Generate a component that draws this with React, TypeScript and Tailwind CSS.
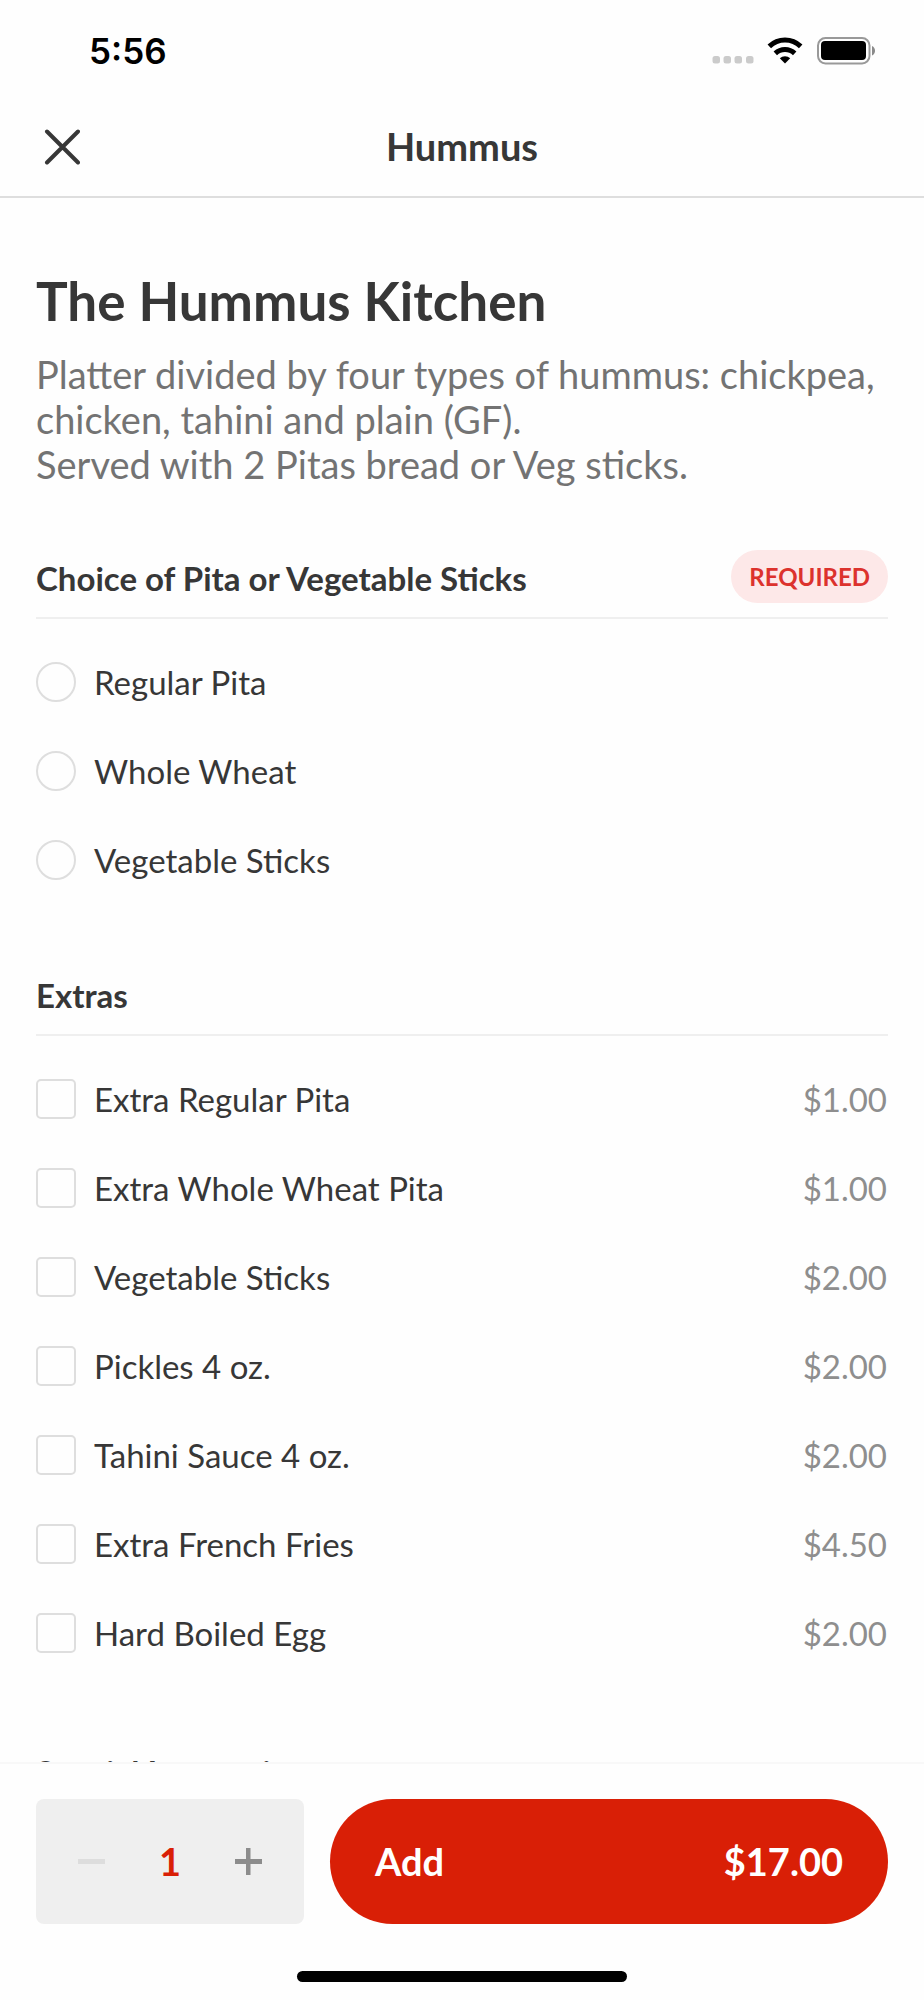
import React, { useState } from 'react';

interface Extra {
  id: string;
  name: string;
  price: number;
}

const BASE_PRICE = 17;

const PITA_CHOICES = ['Regular Pita', 'Whole Wheat', 'Vegetable Sticks'];

const EXTRAS: Extra[] = [
  { id: 'regular-pita', name: 'Extra Regular Pita', price: 1 },
  { id: 'whole-wheat-pita', name: 'Extra Whole Wheat Pita', price: 1 },
  { id: 'veg-sticks', name: 'Vegetable Sticks', price: 2 },
  { id: 'pickles', name: 'Pickles 4 oz.', price: 2 },
  { id: 'tahini', name: 'Tahini Sauce 4 oz.', price: 2 },
  { id: 'fries', name: 'Extra French Fries', price: 4.5 },
  { id: 'egg', name: 'Hard Boiled Egg', price: 2 },
];

const formatPrice = (value: number) => `$${value.toFixed(2)}`;

const StatusBar: React.FC = () => (
  <div className="flex h-[102px] items-center justify-between pl-[89px] pr-12">
    <span className="font-['Inter'] text-[35px] font-semibold leading-10 text-black">5:56</span>
    <div className="flex items-center gap-[13px]">
      {/* No signal */}
      <svg width="42" height="28" viewBox="0 0 42 28" fill="#cbcbcb" aria-hidden="true">
        <rect x="0.5" y="19" width="7.5" height="7.5" rx="2.5" />
        <rect x="11.5" y="19" width="7.5" height="7.5" rx="2.5" />
        <rect x="22.5" y="19" width="7.5" height="7.5" rx="2.5" />
        <rect x="34" y="19" width="7.5" height="7.5" rx="2.5" />
      </svg>
      <svg width="36" height="28" viewBox="0 0 36 28" aria-hidden="true">
        <path d="M2.3 9.4a22.600 22.600 0 0 1 31.400 0" fill="none" stroke="#000" strokeWidth="5" />
        <path d="M8.300 16.300a14.200 14.200 0 0 1 19.400 0" fill="none" stroke="#000" strokeWidth="5" />
        <path d="M18 26.500l-5.200-5.300a7.800 7.800 0 0 1 10.400 0z" fill="#000" />
      </svg>
      <svg width="60" height="28" viewBox="0 0 60 28" aria-hidden="true">
        <rect x="2" y="1" width="51.5" height="25.5" rx="7.5" fill="none" stroke="#999" strokeWidth="2" />
        <rect x="5" y="4" width="45" height="19" rx="4" fill="#000" />
        <path d="M56 9c4 1.500 4 8 0 9.500z" fill="#8a8a8a" />
      </svg>
    </div>
  </div>
);

const SectionHeader: React.FC<{ title: string; required?: boolean }> = ({ title, required }) => (
  <div className="flex h-[69px] items-end justify-between border-b-2 border-[#efefef] pb-[14px]">
    <h2 className="text-[33px] font-bold leading-[49px]">{title}</h2>
    {required && (
      <span className="flex h-[53px] items-center rounded-full bg-[#fde8e8] px-[18px] text-2xl font-bold text-[#dc322d]">
        REQUIRED
      </span>
    )}
  </div>
);

export default function App() {
  const [pita, setPita] = useState('');
  const [selected, setSelected] = useState<string[]>([]);
  const [quantity, setQuantity] = useState(1);

  const toggleExtra = (id: string) => {
    setSelected(prev => (prev.includes(id) ? prev.filter(x => x !== id) : [...prev, id]));
  };

  const extrasTotal = EXTRAS.filter(e => selected.includes(e.id)).reduce((sum, e) => sum + e.price, 0);
  const total = (BASE_PRICE + extrasTotal) * quantity;

  return (
    <div className="flex h-screen flex-col bg-[#fefefe] font-['Lato',sans-serif] text-[#373737]">
      <header className="shrink-0 border-b-2 border-[#dedede]">
        <StatusBar />
        <div className="grid h-[94px] grid-cols-[1fr_auto_1fr] items-center px-11 pb-[5px]">
          <button aria-label="Close" className="w-9">
            <svg width="36" height="36" viewBox="0 0 36 36" fill="none" stroke="#373737" strokeWidth="4" strokeLinecap="round">
              <path d="M3 2.500l31 31M34 2.500L3 33.500" />
            </svg>
          </button>
          <h1 className="text-[38px] font-bold leading-[45px]">Hummus</h1>
        </div>
      </header>

      <main className="min-h-0 flex-1 overflow-y-auto px-9 pt-[71px] [scrollbar-width:none]">
        <h2 className="text-[53px] font-bold leading-[64px]">The Hummus Kitchen</h2>
        <p className="mt-[19px] text-[38px] leading-[45px] text-[#737373]">
          Platter divided by four types of hummus: chickpea, chicken, tahini and plain (GF).
          <br />
          Served with 2 Pitas bread or Veg sticks.
        </p>

        <section className="mt-[63px]">
          <SectionHeader title="Choice of Pita or Vegetable Sticks" required />
          <div className="flex flex-col gap-[49px] pt-[43px]">
            {PITA_CHOICES.map(choice => (
              <label key={choice} className="flex h-10 items-center gap-[18px] text-[33px] leading-10">
                <input
                  type="radio"
                  name="pita"
                  checked={pita === choice}
                  onChange={() => setPita(choice)}
                  className="size-10 shrink-0 appearance-none rounded-full border-2 border-[#dedede] checked:border-[12px] checked:border-[#d91f06]"
                />
                {choice}
              </label>
            ))}
          </div>
        </section>

        <section className="mt-[87px]">
          <SectionHeader title="Extras" />
          <div className="flex flex-col gap-[49px] pt-[43px]">
            {EXTRAS.map(extra => (
              <label key={extra.id} className="flex h-10 items-center gap-[18px] text-[33px] leading-10">
                <input
                  type="checkbox"
                  checked={selected.includes(extra.id)}
                  onChange={() => toggleExtra(extra.id)}
                  className="size-10 shrink-0 appearance-none rounded-[5px] border-2 border-[#dedede] checked:border-[#d91f06] checked:bg-[#d91f06]"
                />
                <span className="flex-1">{extra.name}</span>
                <span className="pr-px text-[#8e8e8e]">{formatPrice(extra.price)}</span>
              </label>
            ))}
          </div>
        </section>

        <section className="mt-[91px] pb-10">
          <SectionHeader title="Special Instructions" />
        </section>
      </main>

      <footer className="shrink-0 border-t-2 border-[#f8f8f8] px-9 pb-[18px] pt-[35px]">
        <div className="flex h-[125px] gap-[26px]">
          <div className="flex w-[268px] shrink-0 items-center justify-between rounded-lg bg-[#efefef] px-[42px]">
            <button aria-label="Decrease quantity" disabled={quantity === 1} onClick={() => setQuantity(quantity - 1)}>
              <svg width="27" height="27" viewBox="0 0 27 27" fill={quantity === 1 ? '#dddddd' : '#8c8c8c'}>
                <rect y="11" width="27" height="5" />
              </svg>
            </button>
            <span className="text-[38px] font-bold leading-[45px] text-[#d91f06]">{quantity}</span>
            <button aria-label="Increase quantity" onClick={() => setQuantity(quantity + 1)}>
              <svg width="27" height="27" viewBox="0 0 27 27" fill="#8c8c8c">
                <path d="M11 0h4.500v11H27v5H15.500v11H11V16H0v-5h11z" />
              </svg>
            </button>
          </div>
          <button className="flex flex-1 items-center justify-between rounded-full bg-[#d91f06] px-[45px] text-[38px] font-bold leading-[45px] text-white">
            <span>Add</span>
            <span>{formatPrice(total)}</span>
          </button>
        </div>
        {/* Home indicator */}
        <div className="mx-auto mt-[47px] h-[11px] w-[330px] rounded-full bg-black" />
      </footer>
    </div>
  );
}
